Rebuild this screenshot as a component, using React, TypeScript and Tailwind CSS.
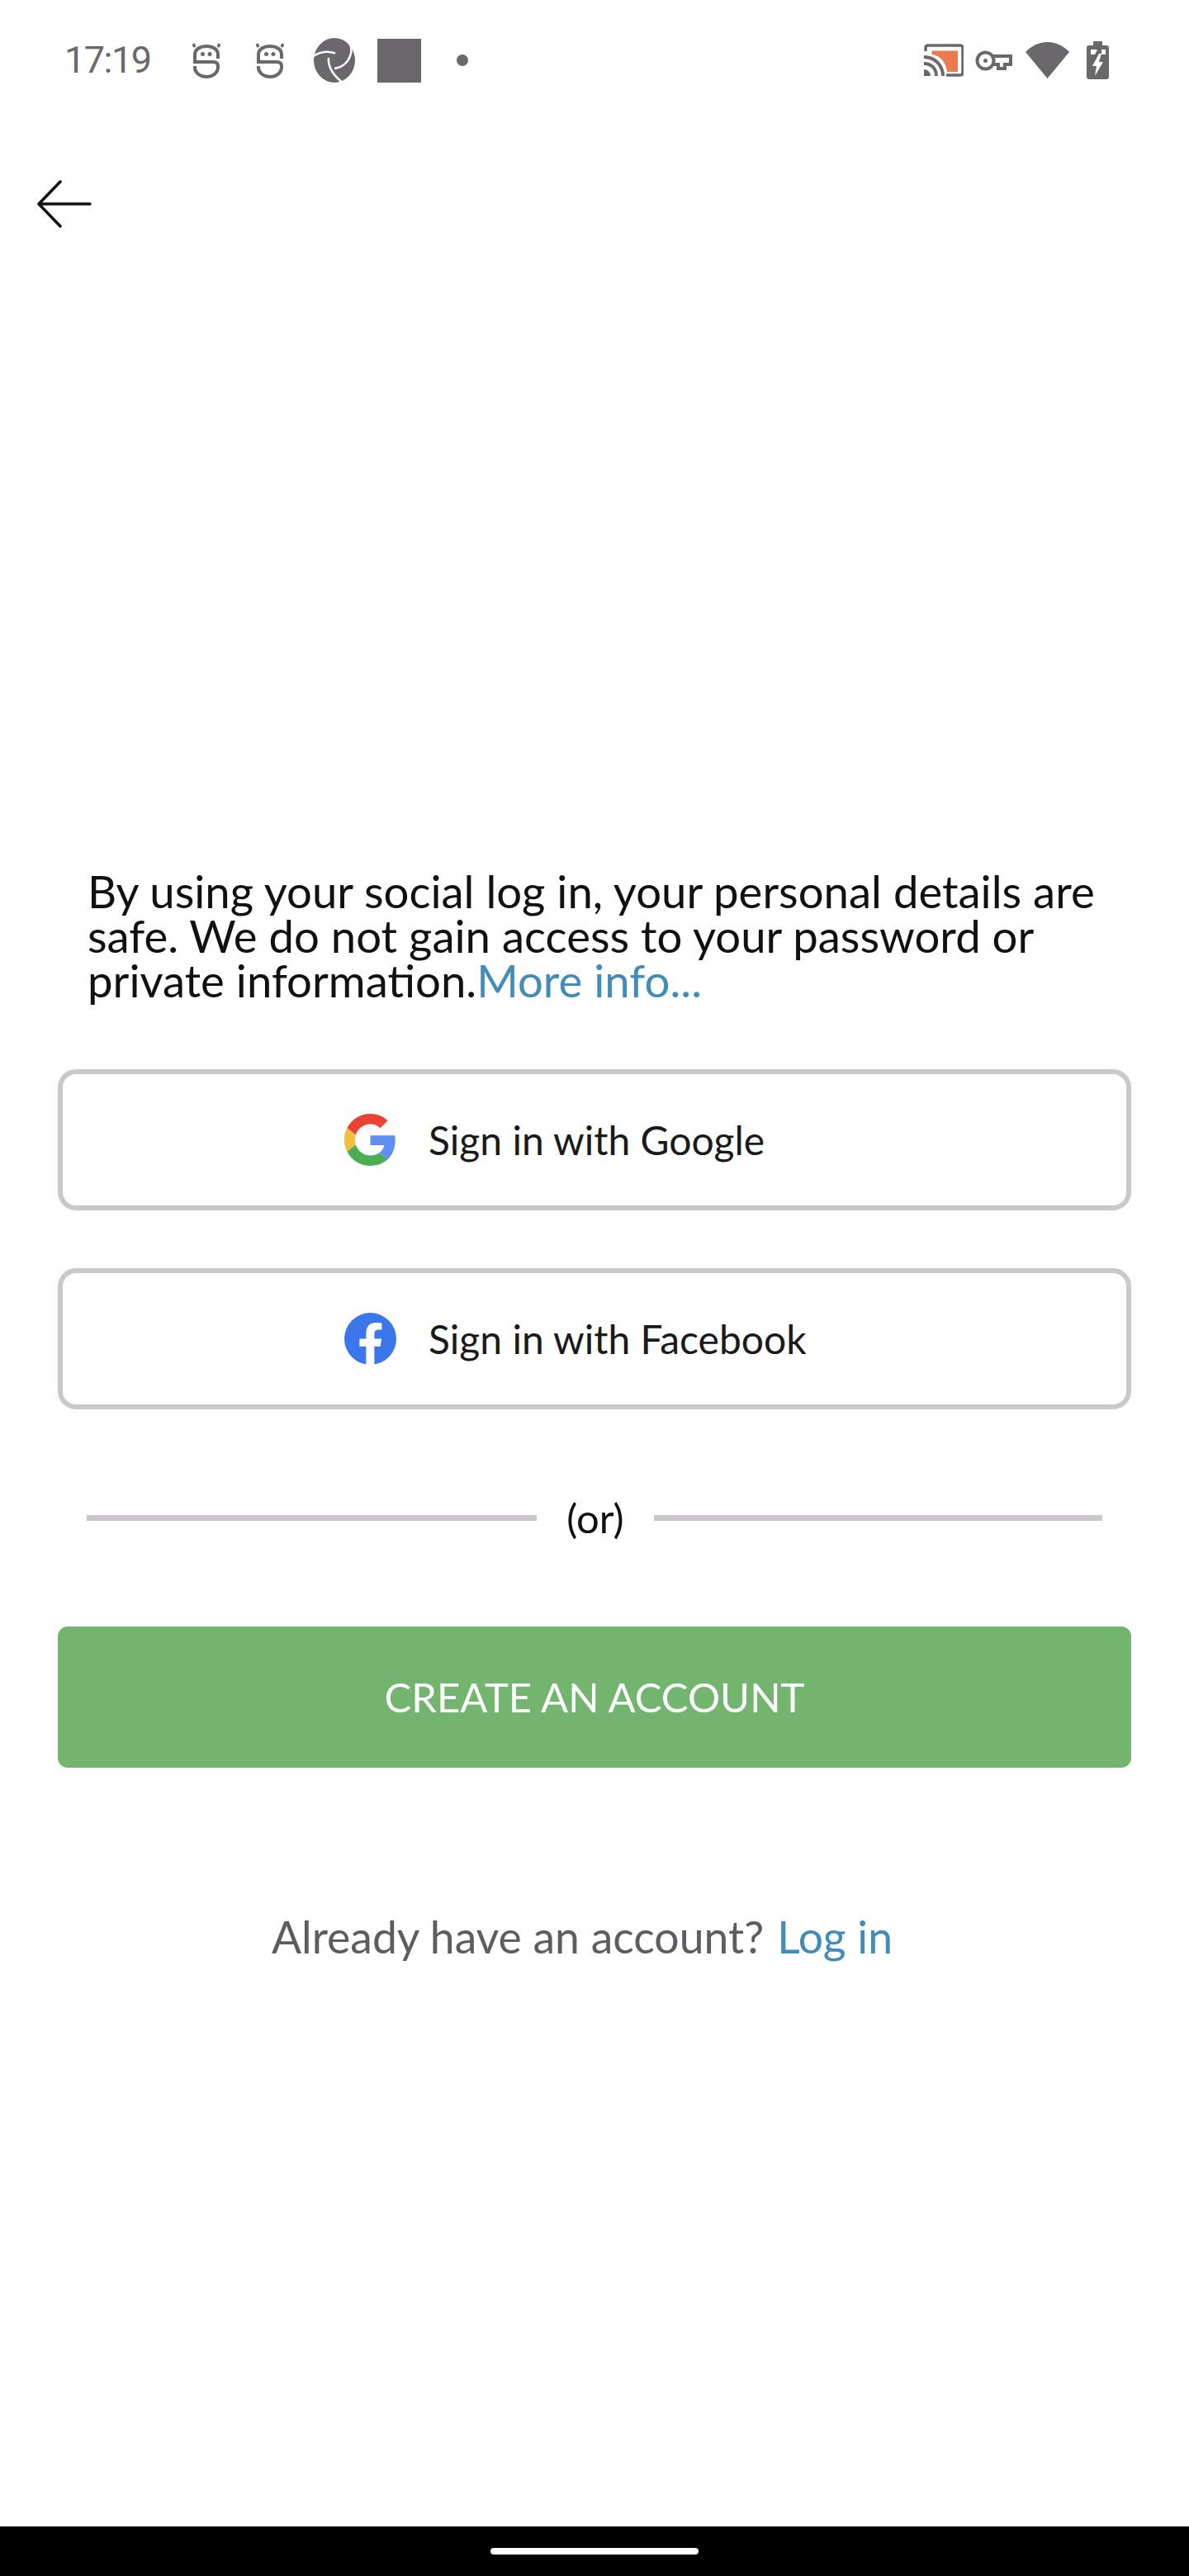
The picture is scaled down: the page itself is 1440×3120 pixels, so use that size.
import React from "react";

const GREY = "#6a686b";

const Bot = () => (
  <svg width="34" height="43" viewBox="0 0 34 43" fill="none" stroke={GREY} strokeWidth="4">
    <path d="M31 19V14C31 8 25 4 17 4C9 4 3 8 3 14V23H25C29 23 31 25 31 28V29C31 36 25 41 17 41C9 41 3 36 3 30V28" />
    <path d="M3 5L1 1M31 5L33 1" strokeWidth="3.5" />
    <circle cx="12.5" cy="13.5" r="2.5" fill={GREY} stroke="none" />
    <circle cx="21" cy="13.5" r="2.5" fill={GREY} stroke="none" />
  </svg>
);

const Shutter = () => (
  <svg width="54" height="54" viewBox="0 0 54 54">
    <ellipse cx="27" cy="27" rx="25" ry="27" fill={GREY} />
    <path d="M0 23C8 17 18 15 28 18.5" fill="none" stroke="#fff" strokeWidth="2.5" />
    <path d="M40 0C47 6 49 14 46 22C43 30 36 36 27 37" fill="none" stroke="#fff" strokeWidth="2.5" />
    <path d="M20 24C19 35 26 47 40 56" fill="none" stroke="#fff" strokeWidth="2.5" />
  </svg>
);

const CastIcon = () => (
  <svg width="48" height="40" viewBox="0 0 48 40">
    <path d="M9.5 8.5H41V34H28C27 23 20 14 9.5 13Z" fill="#ec7a4d" />
    <path d="M2 9V5C2 3 3 2 5 2H44C46 2 47 3 47 5V35C47 37 46 38 44 38H27" fill="none" stroke={GREY} strokeWidth="3.5" />
    <path d="M0 16C13 16 23 26 23 39M0 24C9 24 15 30 15 39" fill="none" stroke={GREY} strokeWidth="4" />
    <path d="M0 31V39H8C8 35 5 31 0 31Z" fill={GREY} />
  </svg>
);

const KeyIcon = () => (
  <svg width="45" height="25" viewBox="0 0 45 25" fill="none" stroke={GREY} strokeWidth="4">
    <circle cx="12.5" cy="12.5" r="10" />
    <path d="M22 7H43V17H36V22H28V17H22" />
    <circle cx="12.5" cy="12.5" r="2.5" fill={GREY} stroke="none" />
  </svg>
);

const WifiIcon = () => (
  <svg width="53" height="44" viewBox="0 0 53 44">
    <path d="M0 12C15 -4 38 -4 53 12L26.5 44Z" fill={GREY} />
  </svg>
);

const BatteryIcon = () => (
  <svg width="27" height="46" viewBox="0 0 27 46">
    <path d="M8 0H19V5H24C26 5 27 6 27 8V43C27 45 26 46 24 46H3C1 46 0 45 0 43V8C0 6 1 5 3 5H8Z" fill={GREY} />
    <path d="M15 15L7 30H12L10 42L20 25H15L18 15Z" fill="#fff" />
    <path d="M5 10H13L10 16H5ZM18 10H23V16H18Z" fill="#fff" />
  </svg>
);

const GoogleIcon = () => (
  <svg width="63" height="63" viewBox="0 0 48 48">
    <path fill="#ea4335" d="M24 9.5c3.54 0 6.71 1.22 9.21 3.6l6.85-6.85C35.9 2.38 30.47 0 24 0 14.62 0 6.51 5.38 2.56 13.22l7.98 6.19C12.43 13.72 17.74 9.5 24 9.5z" />
    <path fill="#5f8ff2" d="M46.98 24.55c0-1.57-.15-3.09-.38-4.55H24v9.02h12.94c-.58 2.96-2.26 5.48-4.78 7.18l7.73 6c4.51-4.18 7.09-10.36 7.09-17.65z" />
    <path fill="#f2be42" d="M10.53 28.59c-.48-1.45-.76-2.99-.76-4.59s.27-3.14.76-4.59l-7.98-6.19C.92 16.46 0 20.12 0 24c0 3.88.92 7.54 2.56 10.78l7.97-6.19z" />
    <path fill="#4cae52" d="M24 48c6.48 0 11.93-2.13 15.89-5.81l-7.73-6c-2.15 1.45-4.92 2.3-8.16 2.3-6.26 0-11.57-4.22-13.47-9.91l-7.98 6.19C6.51 42.62 14.62 48 24 48z" />
  </svg>
);

const FacebookIcon = () => (
  <svg width="63" height="63" viewBox="0 0 48 48">
    <circle cx="24" cy="24" r="24" fill="#3b77ea" />
    <path fill="#fff" d="M33.3 31l1.1-7H27.7v-4.5c0-1.9.9-3.8 3.9-3.8h3v-6s-2.8-.5-5.4-.5c-5.5 0-9.1 3.3-9.1 9.4V24h-6.1v7h6.1v17c1.2.2 2.5.3 3.8.3s2.6-.1 3.8-.3V31h5.6z" />
  </svg>
);

const SocialButton = ({ icon, label, className }: { icon: React.ReactNode; label: string; className?: string }) => (
  <button className={`h-[171px] w-full rounded-[22px] border-[6px] border-[#cac8cb] bg-white flex items-center pl-[341px] ${className ?? ""}`}>
    {icon}
    <span className="ml-[39px] text-[48px] text-[#1a1a1a]">{label}</span>
  </button>
);

export default function App() {
  return (
    <div className="w-[1440px] h-[3120px] bg-white flex flex-col font-['Lato',sans-serif] overflow-hidden">
      <div className="h-[146px] pl-[78px] pr-[97px] flex items-center justify-between shrink-0">
        <div className="flex items-center">
          <span className="w-[106px] text-[45px] tracking-[-1.5px] text-[#6a686b] font-['Roboto',sans-serif]">17:19</span>
          <div className="flex items-center ml-[49px] gap-[43px]"><Bot /><Bot /></div>
          <div className="ml-[34px]"><Shutter /></div>
          <div className="ml-[25px] w-[53px] h-[53px] bg-[#6a686b]" />
          <div className="ml-[43px] w-[14px] h-[14px] rounded-full bg-[#6a686b]" />
        </div>
        <div className="flex items-center">
          <CastIcon />
          <div className="ml-[14px]"><KeyIcon /></div>
          <div className="ml-[16px]"><WifiIcon /></div>
          <div className="ml-[21px]"><BatteryIcon /></div>
        </div>
      </div>

      <div className="mt-[72px] pl-[44px] h-[58px] shrink-0">
        <svg width="68" height="58" viewBox="0 0 68 58" fill="none" stroke="#111" strokeWidth="3.5" strokeLinecap="round" strokeLinejoin="round">
          <path d="M65 29H3M29 2L3 29L29 56" />
        </svg>
      </div>

      <p className="mt-[776px] px-[106px] text-[54.5px] leading-[54px] text-[#111]">
        By using your social log in, your personal details are safe. We do not gain access to your password or private information.<span className="text-[#428cb7]">More info...</span>
      </p>

      <div className="mt-[81px] px-[70px] flex flex-col">
        <SocialButton icon={<GoogleIcon />} label="Sign in with Google" />
        <SocialButton className="mt-[70px]" icon={<FacebookIcon />} label="Sign in with Facebook" />
      </div>

      <div className="mt-[103px] px-[105px] flex items-center">
        <div className="w-[545px] h-[7px] bg-[#cac8cb]" />
        <span className="flex-1 text-center text-[49px] leading-[56px] text-[#111]">(or)</span>
        <div className="w-[543px] h-[7px] bg-[#cac8cb]" />
      </div>

      <div className="mt-[104px] mx-[70px] h-[171px] rounded-[12px] bg-[#73b56f] flex items-center justify-center text-white text-[49px]">
        CREATE AN ACCOUNT
      </div>

      <div className="mt-[172px] pr-[30px] flex justify-center items-center text-[53.5px] leading-[64px]">
        <span className="text-[#5e5c5f]">Already have an account?</span>
        <span className="ml-[16px] text-[#428cb7]">Log in</span>
      </div>

      <div className="mt-auto h-[60px] bg-black flex justify-center items-center shrink-0">
        <div className="w-[252px] h-[8px] rounded-full bg-white" />
      </div>
    </div>
  );
}
